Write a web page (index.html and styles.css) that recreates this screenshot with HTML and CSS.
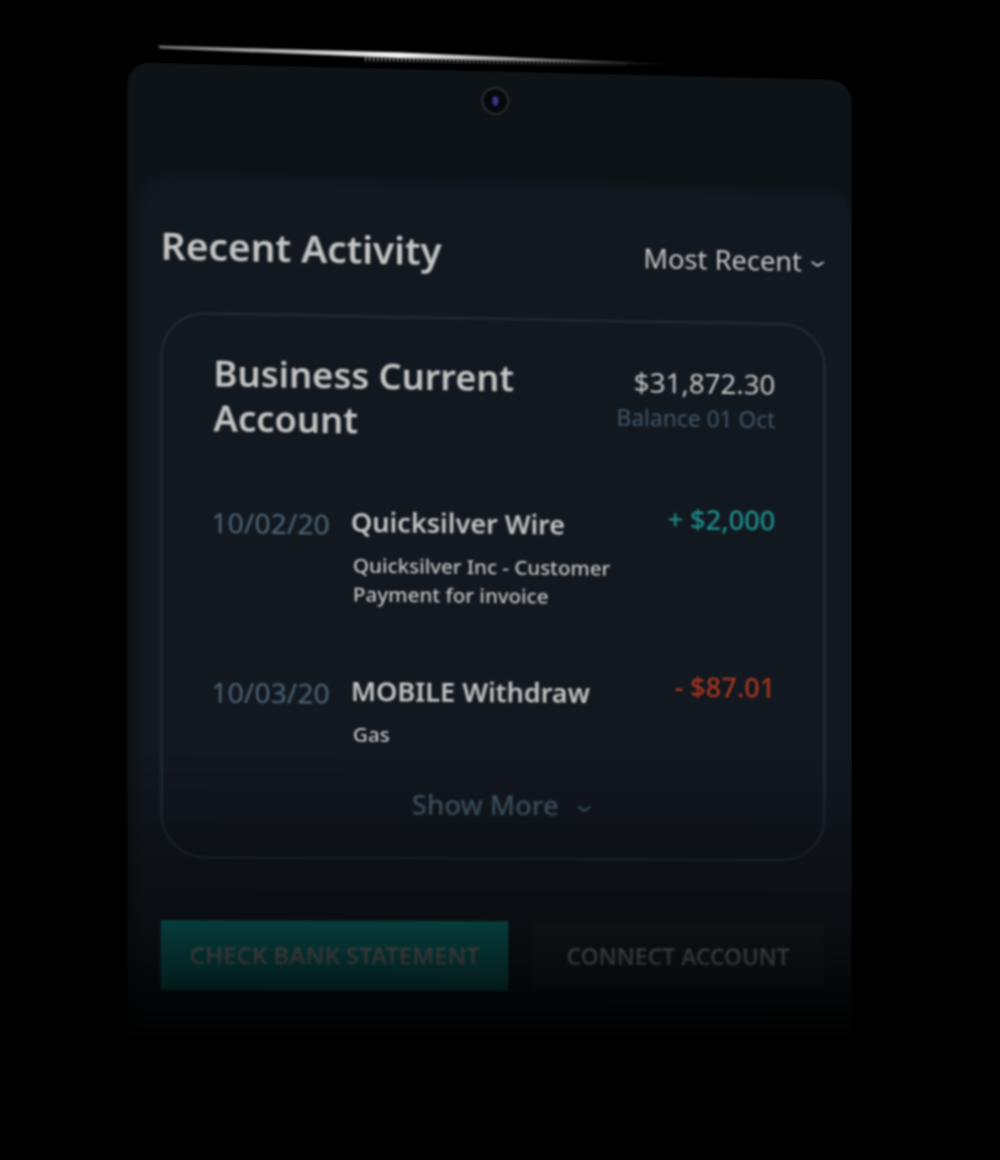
FILE: index.html
```html
<!DOCTYPE html>
<html lang="en">
<head>
    <meta charset="UTF-8">
    <meta name="viewport" content="width=device-width, initial-scale=1.0">
    <title>Recent Activity</title>
    <link rel="stylesheet" href="styles.css">
</head>
<body>
<!-- Light catching the top edge of the phone -->
<svg class="sheen" width="1000" height="80" viewBox="0 0 1000 80">
    <defs>
        <linearGradient id="sheenFade" gradientUnits="userSpaceOnUse" x1="158" y1="0" x2="690" y2="0">
            <stop offset="0" stop-color="#6e6e6e"/>
            <stop offset="0.45" stop-color="#f4f4f4"/>
            <stop offset="0.75" stop-color="#777777"/>
            <stop offset="1" stop-color="#000000"/>
        </linearGradient>
    </defs>
    <polygon points="158,45.5 400,52.5 690,65 400,58 160,48.5" fill="url(#sheenFade)"/>
    <line x1="365" y1="59" x2="626" y2="64.5" stroke="url(#sheenFade)" stroke-width="4" stroke-dasharray="1.5 2.5" stroke-opacity="0.6"/>
</svg>

<div class="phone">
    <div class="top-bar">
        <div class="camera"><div class="lens"></div></div>
    </div>

    <div class="panel">
        <div class="panel-head">
            <h1 class="panel-title">Recent Activity</h1>
            <div class="sort">
                Most Recent
                <svg class="chevron" width="16" height="10" viewBox="0 0 16 10"><path d="M2 3l6 4 6-4"/></svg>
            </div>
        </div>

        <div class="card">
            <div class="card-head">
                <h2 class="account-name">Business Current Account</h2>
                <div class="balance">
                    <div class="balance-value">$31,872.30</div>
                    <div class="balance-date">Balance 01 Oct</div>
                </div>
            </div>

            <div class="row">
                <div class="date">10/02/20</div>
                <div class="details">
                    <div class="name">Quicksilver Wire</div>
                    <div class="note">Quicksilver Inc - Customer Payment for invoice</div>
                </div>
                <div class="amount plus">+ $2,000</div>
            </div>

            <div class="row">
                <div class="date">10/03/20</div>
                <div class="details">
                    <div class="name">MOBILE Withdraw</div>
                    <div class="note">Gas</div>
                </div>
                <div class="amount minus">- $87.01</div>
            </div>

            <div class="show-more">
                Show More
                <svg class="chevron" width="16" height="10" viewBox="0 0 16 10"><path d="M2 3l6 4 6-4"/></svg>
            </div>
        </div>

        <div class="actions">
            <button class="btn btn-green">CHECK BANK STATEMENT</button>
            <button class="btn btn-dark">CONNECT ACCOUNT</button>
        </div>
    </div>
</div>
</body>
</html>
```

FILE: styles.css
```css
/* Global styles */
* {
    margin: 0;
    padding: 0;
    box-sizing: border-box;
}

html,
body {
    height: 100%;
    background-color: #000;
    overflow: hidden;
}

body {
    font-family: "Noto Sans", sans-serif;
    color: #c4c4c4;
    padding: 62px 0 0 127px;
}

.sheen {
    position: absolute;
    left: 0;
    top: 0;
    filter: blur(0.9px);
}

/* Phone, pushed back in perspective */
.phone {
    display: flex;
    flex-direction: column;
    width: 725px;
    height: 980px;
    background-color: #0e1317;
    border-radius: 22px 22px 0 0;
    transform-origin: 0 0;
    transform: matrix3d(1.0187, 0.0253, 0, 0.0000258, 0, 1, 0, 0, 0, 0, 1, 0, 0, 0, 0, 1);
    filter: blur(0.9px);
    -webkit-mask-image: linear-gradient(to bottom, #000 70%, rgba(0, 0, 0, 0.55) 88%, transparent 100%);
    mask-image: linear-gradient(to bottom, #000 70%, rgba(0, 0, 0, 0.55) 88%, transparent 100%);
}

.top-bar {
    display: flex;
    justify-content: center;
    height: 108px;
    padding: 16px 0 0 4px;
}

.camera {
    display: flex;
    align-items: center;
    justify-content: center;
    width: 28px;
    height: 28px;
    border-radius: 50%;
    background-color: #07080b;
    border: 2px solid #2a2d31;
}

.lens {
    width: 6px;
    height: 10px;
    border-radius: 50%;
    background-color: #3d3590;
}

/* Panel */
.panel {
    flex: 1;
    display: flex;
    flex-direction: column;
    margin-left: 6px;
    padding: 49px 27px 0 27px;
    background-color: #12181f;
    border-radius: 34px 34px 0 0;
    box-shadow: inset 7px 7px 9px -5px #0e1317;
}

.panel-head {
    display: flex;
    justify-content: space-between;
    align-items: center;
    height: 50px;
    margin-bottom: 42px;
}

.panel-title {
    font-size: 38.5px;
    font-weight: 600;
    line-height: 48px;
    letter-spacing: -0.1px;
}

.sort {
    display: flex;
    align-items: center;
    gap: 8px;
    font-size: 27.6px;
    margin-top: 5px;
}

.chevron {
    margin-top: 6px;
    fill: none;
    stroke: currentColor;
    stroke-width: 2;
}

/* Card */
.card {
    display: flex;
    flex-direction: column;
    height: 547px;
    padding: 36px 49px 0 50px;
    border: 2px solid #222d37;
    border-radius: 44px;
}

.card-head {
    display: flex;
    justify-content: space-between;
    margin-bottom: 62px;
}

.account-name {
    width: 340px;
    font-size: 36px;
    font-weight: 600;
    line-height: 45px;
}

.balance {
    text-align: right;
    padding-top: 6px;
}

.balance-value {
    font-size: 28px;
    line-height: 36px;
    margin-bottom: 2px;
}

.balance-date {
    font-size: 23px;
    line-height: 32px;
    color: #40566a;
}

.row {
    display: flex;
    margin-bottom: 65px;
}

.row + .row {
    margin-bottom: 38px;
}

.date {
    width: 138px;
    margin-left: -2px;
    padding-top: 2px;
    font-size: 28px;
    line-height: 36px;
    color: #4f6679;
    flex-shrink: 0;
}

.details {
    flex: 1;
}

.name {
    font-size: 27px;
    font-weight: 600;
    line-height: 36px;
    margin-bottom: 11px;
}

.note {
    max-width: 285px;
    margin-left: 2px;
    font-size: 20.5px;
    font-weight: 500;
    line-height: 29px;
}

.amount {
    margin-top: -3px;
    font-size: 27.5px;
    font-weight: 500;
    line-height: 28px;
}

.plus {
    color: #1f8c8c;
}

.minus {
    color: #a8361f;
}

.show-more {
    display: flex;
    justify-content: center;
    align-items: center;
    gap: 18px;
    padding-left: 12px;
    font-size: 27.5px;
    font-weight: 500;
    color: #44596b;
    line-height: 36px;
}

/* Bottom buttons */
.actions {
    display: flex;
    gap: 24px;
    margin-top: 62px;
}

.btn {
    height: 70px;
    border: none;
    font-family: inherit;
    font-size: 23.7px;
    font-weight: 600;
    color: #808080;
}

.btn-green {
    width: 345px;
    background-color: #0b6a68;
}

.btn-dark {
    flex: 1;
    margin-right: 2px;
    font-size: 23px;
    background-color: #191e23;
}
```
